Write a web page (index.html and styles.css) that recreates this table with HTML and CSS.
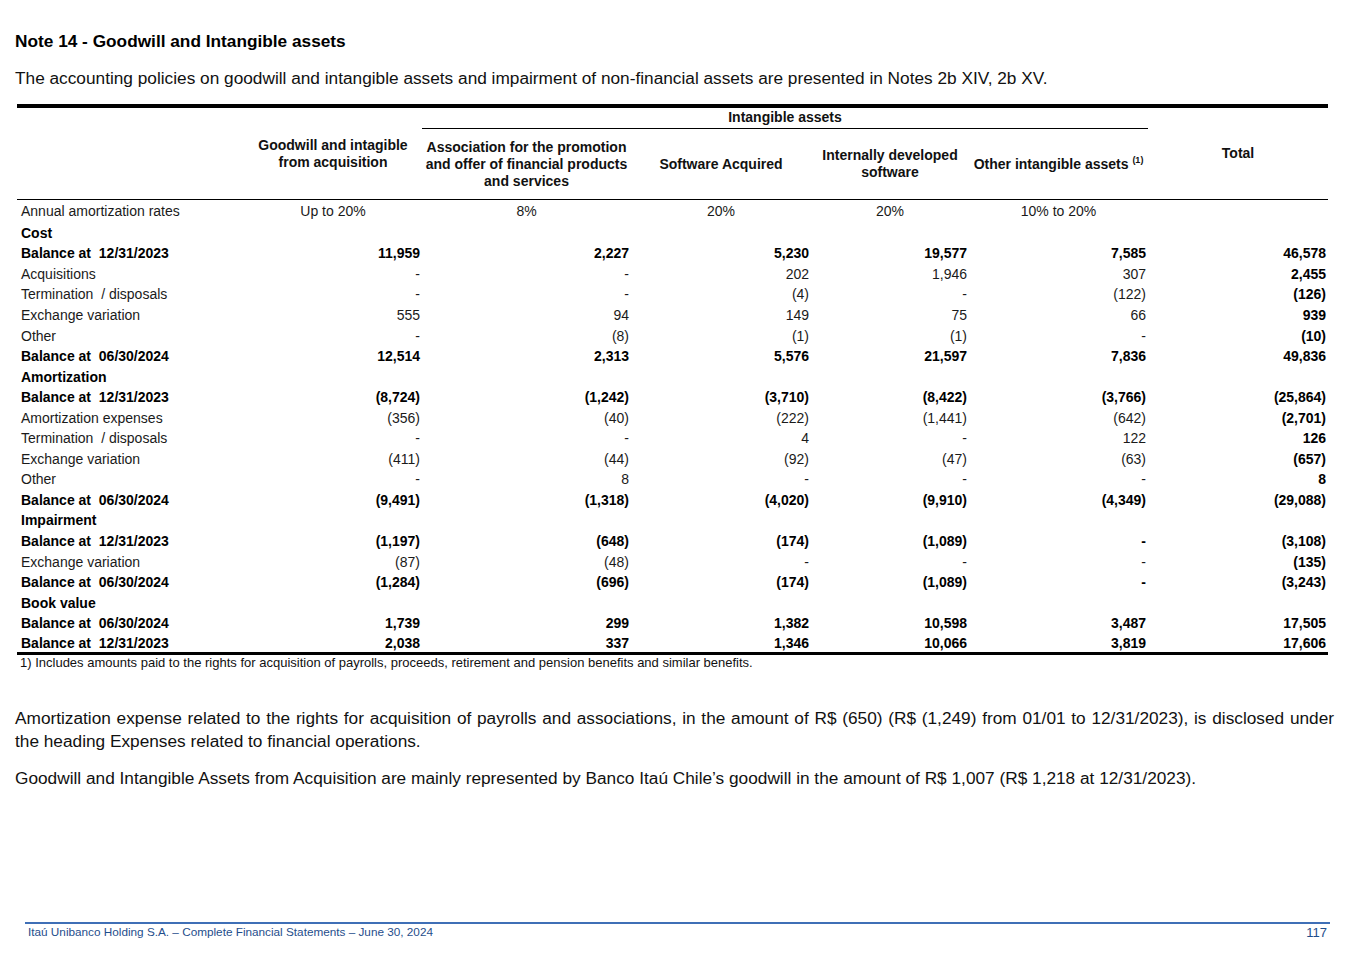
FILE: index.html
```html
<!DOCTYPE html>
<html>
<head>
<meta charset="utf-8">
<link rel="stylesheet" href="styles.css">
</head>
<body>
<div class="page">
  <h1 class="title">Note 14 - Goodwill and Intangible assets</h1>
  <p class="intro">The accounting policies on goodwill and intangible assets and impairment of non-financial assets are presented in Notes 2b XIV, 2b XV.</p>

  <table class="fin">
    <colgroup>
      <col class="c-label"><col class="c1"><col class="c2"><col class="c3"><col class="c4"><col class="c5"><col class="c6">
    </colgroup>
    <thead>
      <tr class="h1">
        <th rowspan="2"></th>
        <th rowspan="2" class="hd">Goodwill and intagible<br>from acquisition</th>
        <th colspan="4" class="group">Intangible assets</th>
        <th rowspan="2" class="hd">Total</th>
      </tr>
      <tr class="h2">
        <th class="hd">Association for the promotion<br>and offer of financial products<br>and services</th>
        <th class="hd">Software Acquired</th>
        <th class="hd">Internally developed<br>software</th>
        <th class="hd">Other intangible assets <sup>(1)</sup></th>
      </tr>
    </thead>
    <tbody>
      <tr class="rates"><td class="lbl">Annual amortization rates</td><td>Up to 20%</td><td>8%</td><td>20%</td><td>20%</td><td>10% to 20%</td><td></td></tr>
      <tr class="sec"><td class="lbl">Cost</td><td></td><td></td><td></td><td></td><td></td><td></td></tr>
      <tr class="b"><td class="lbl">Balance at&nbsp; 12/31/2023</td><td>11,959</td><td>2,227</td><td>5,230</td><td>19,577</td><td>7,585</td><td>46,578</td></tr>
      <tr><td class="lbl">Acquisitions</td><td>-</td><td>-</td><td>202</td><td>1,946</td><td>307</td><td class="tot">2,455</td></tr>
      <tr><td class="lbl">Termination&nbsp; / disposals</td><td>-</td><td>-</td><td>(4)</td><td>-</td><td>(122)</td><td class="tot">(126)</td></tr>
      <tr><td class="lbl">Exchange variation</td><td>555</td><td>94</td><td>149</td><td>75</td><td>66</td><td class="tot">939</td></tr>
      <tr><td class="lbl">Other</td><td>-</td><td>(8)</td><td>(1)</td><td>(1)</td><td>-</td><td class="tot">(10)</td></tr>
      <tr class="b"><td class="lbl">Balance at&nbsp; 06/30/2024</td><td>12,514</td><td>2,313</td><td>5,576</td><td>21,597</td><td>7,836</td><td>49,836</td></tr>
      <tr class="sec"><td class="lbl">Amortization</td><td></td><td></td><td></td><td></td><td></td><td></td></tr>
      <tr class="b"><td class="lbl">Balance at&nbsp; 12/31/2023</td><td>(8,724)</td><td>(1,242)</td><td>(3,710)</td><td>(8,422)</td><td>(3,766)</td><td>(25,864)</td></tr>
      <tr><td class="lbl">Amortization expenses</td><td>(356)</td><td>(40)</td><td>(222)</td><td>(1,441)</td><td>(642)</td><td class="tot">(2,701)</td></tr>
      <tr><td class="lbl">Termination&nbsp; / disposals</td><td>-</td><td>-</td><td>4</td><td>-</td><td>122</td><td class="tot">126</td></tr>
      <tr><td class="lbl">Exchange variation</td><td>(411)</td><td>(44)</td><td>(92)</td><td>(47)</td><td>(63)</td><td class="tot">(657)</td></tr>
      <tr><td class="lbl">Other</td><td>-</td><td>8</td><td>-</td><td>-</td><td>-</td><td class="tot">8</td></tr>
      <tr class="b"><td class="lbl">Balance at&nbsp; 06/30/2024</td><td>(9,491)</td><td>(1,318)</td><td>(4,020)</td><td>(9,910)</td><td>(4,349)</td><td>(29,088)</td></tr>
      <tr class="sec"><td class="lbl">Impairment</td><td></td><td></td><td></td><td></td><td></td><td></td></tr>
      <tr class="b"><td class="lbl">Balance at&nbsp; 12/31/2023</td><td>(1,197)</td><td>(648)</td><td>(174)</td><td>(1,089)</td><td>-</td><td>(3,108)</td></tr>
      <tr><td class="lbl">Exchange variation</td><td>(87)</td><td>(48)</td><td>-</td><td>-</td><td>-</td><td class="tot">(135)</td></tr>
      <tr class="b"><td class="lbl">Balance at&nbsp; 06/30/2024</td><td>(1,284)</td><td>(696)</td><td>(174)</td><td>(1,089)</td><td>-</td><td>(3,243)</td></tr>
      <tr class="sec"><td class="lbl">Book value</td><td></td><td></td><td></td><td></td><td></td><td></td></tr>
      <tr class="b"><td class="lbl">Balance at&nbsp; 06/30/2024</td><td>1,739</td><td>299</td><td>1,382</td><td>10,598</td><td>3,487</td><td>17,505</td></tr>
      <tr class="b last"><td class="lbl">Balance at&nbsp; 12/31/2023</td><td>2,038</td><td>337</td><td>1,346</td><td>10,066</td><td>3,819</td><td>17,606</td></tr>
    </tbody>
  </table>
  <p class="footnote">1) Includes amounts paid to the rights for acquisition of payrolls, proceeds, retirement and pension benefits and similar benefits.</p>

  <p class="body first">Amortization expense related to the rights for acquisition of payrolls and associations, in the amount of R$ (650) (R$ (1,249) from 01/01 to 12/31/2023), is disclosed under the heading Expenses related to financial operations.</p>
  <p class="body">Goodwill and Intangible Assets from Acquisition are mainly represented by Banco Itaú Chile’s goodwill in the amount of R$ 1,007 (R$ 1,218 at 12/31/2023).</p>

  <footer class="foot">
    <span class="foot-left">Itaú Unibanco Holding S.A. – Complete Financial Statements – June 30, 2024</span>
    <span class="foot-right">117</span>
  </footer>
</div>
</body>
</html>
```

FILE: styles.css
```css
* { box-sizing: border-box; }
html, body { margin: 0; padding: 0; background: #fff; }
body {
  font-family: "Liberation Sans", Arial, sans-serif;
  color: #111;
  width: 1348px;
  height: 954px;
  overflow: hidden;
}
.page {
  padding: 31px 14px 0 15px;
  display: flex;
  flex-direction: column;
  height: 954px;
}
.title {
  margin: 0;
  font-size: 17.25px;
  line-height: 20px;
  font-weight: bold;
  color: #000;
}
.intro {
  margin: 17px 0 0 0;
  font-size: 17.25px;
  line-height: 20px;
  color: #111;
}
.fin {
  margin: 16px 0 0 2px;
  width: 1311px;
  border-collapse: collapse;
  table-layout: fixed;
  font-size: 14px;
  border-top: 4px solid #000;
  border-bottom: 3px solid #000;
}
.c-label { width: 227px; }
.c1 { width: 178px; }
.c2 { width: 209px; }
.c3 { width: 180px; }
.c4 { width: 158px; }
.c5 { width: 179px; }
.c6 { width: 180px; }

.fin th {
  font-weight: bold;
  padding: 0;
  text-align: center;
  vertical-align: middle;
  color: #111;
  line-height: 17px;
}
.fin thead tr.h1 th[rowspan],
.fin thead tr.h2 th { border-bottom: 1px solid #000; }
.fin .group {
  height: 22px;
  line-height: 18px;
  padding-bottom: 2px;
  border-bottom: 1px solid #000;
}
.fin .h2 th { height: 71px; }
.fin sup { font-size: 9px; vertical-align: 6px; line-height: 0; }

.fin td {
  padding: 0 2px 0 0;
  text-align: right;
  height: 20.55px;
  line-height: 16px;
  white-space: nowrap;
  color: #1a1a1a;
  vertical-align: middle;
}
.fin td.lbl {
  text-align: left;
  padding-left: 4px;
}
.fin tr.rates td { text-align: center; height: 23px; padding: 0 0 1px 0; }
.fin tr.rates td.lbl { text-align: left; padding-left: 4px; }
.fin tr.sec td { font-weight: bold; color: #000; }
.fin tr.b td { font-weight: bold; color: #000; }
.fin td.tot { font-weight: bold; color: #000; }

.footnote {
  margin: 0 0 0 5px;
  font-family: "Liberation Sans", sans-serif;
  font-size: 13px;
  line-height: 16px;
  color: #111;
}
.body {
  margin: 0;
  font-size: 17.25px;
  line-height: 23px;
  text-align: justify;
  color: #111;
}
.body.first { margin-top: 36px; }
.body + .body { margin-top: 14px; }

.foot {
  margin-top: auto;
  margin-bottom: 12px;
  margin-left: 10px;
  margin-right: 4px;
  border-top: 2px solid #3f6fb6;
  display: flex;
  justify-content: space-between;
  align-items: flex-start;
  padding: 0 3px 0 3px;
  font-family: "Liberation Sans", sans-serif;
  color: #1f4e8c;
}
.foot-left { font-size: 11.75px; line-height: 16px; }
.foot-right { font-size: 13px; line-height: 18px; }
```
